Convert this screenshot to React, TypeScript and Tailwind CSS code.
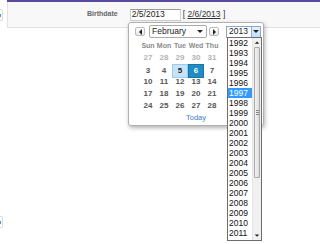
import React from 'react'

const years = Array.from({ length: 20 }, (_, i) => 1992 + i)

type Day = { n: number; muted?: boolean; kind?: 'hover' | 'selected' }

const weeks: Day[][] = [
  [{ n: 27, muted: true }, { n: 28, muted: true }, { n: 29, muted: true }, { n: 30, muted: true }, { n: 31, muted: true }, { n: 1 }, { n: 2 }],
  [{ n: 3 }, { n: 4 }, { n: 5, kind: 'hover' }, { n: 6, kind: 'selected' }, { n: 7 }, { n: 8 }, { n: 9 }],
  [{ n: 10 }, { n: 11 }, { n: 12 }, { n: 13 }, { n: 14 }, { n: 15 }, { n: 16 }],
  [{ n: 17 }, { n: 18 }, { n: 19 }, { n: 20 }, { n: 21 }, { n: 22 }, { n: 23 }],
  [{ n: 24 }, { n: 25 }, { n: 26 }, { n: 27 }, { n: 28 }, { n: 1, muted: true }, { n: 2, muted: true }],
]

function Arrow({ dir }: { dir: 'left' | 'right' | 'down' | 'up' }) {
  const pts = {
    left: '4,1 4,7 1,4',
    right: '1,1 1,7 4,4',
    down: '0,2 6,2 3,5',
    up: '0,5 6,5 3,2',
  }[dir]
  const w = dir === 'left' || dir === 'right' ? 5 : 6
  return (
    <svg width={w} height="8" viewBox={`0 0 ${w} 8`}>
      <polygon points={pts} fill="#222" />
    </svg>
  )
}

function dayClass(d: Day) {
  if (d.kind === 'hover') return 'bg-[#c8e2f8] border border-[#9fcaf0] text-[#222]'
  if (d.kind === 'selected') return 'bg-[#1f8cc4] border border-[#1a76a6] text-white'
  if (d.muted) return 'text-[#b4b4b4]'
  return 'text-[#555]'
}

export default function App() {
  return (
    <div className="relative flex w-[320px] h-[244px] overflow-hidden bg-white font-['Liberation_Sans',Arial,sans-serif]">
      {/* clipped side tabs */}
      <div className="w-[7px] shrink-0 flex flex-col">
        <div className="mt-[9px] h-[12px] w-[3px] rounded-r-[2px] border border-l-0 border-[#dcdcdc] bg-white flex items-center">
          <div className="h-[3px] w-[1px] bg-[#4a90d9]" />
        </div>
        <div className="mt-[195px] h-[12px] w-[3px] rounded-r-[2px] border border-l-0 border-[#dcdcdc] bg-white flex items-center">
          <div className="h-[3px] w-[1px] bg-[#4a90d9]" />
        </div>
      </div>

      <div className="flex-1">
        <div className="h-[2px] bg-[#5a4a9c]" />
        <div className="h-[26px] bg-[#f8f8f8] border-l border-b border-[#e2e2e2] flex items-center">
          <span className="ml-[79px] text-[7px] font-bold text-[#666]">Birthdate</span>
          <div className="ml-[12px] h-[12px] w-[51px] bg-white border border-[#cfcfcf] border-t-[#999] flex items-center pl-[1px] text-[8.5px] text-[#222]">
            2/5/2013
          </div>
          <span className="ml-[2px] text-[8.5px] text-[#333]">
            [ <span className="underline">2/6/2013</span> ]
          </span>
        </div>
      </div>

      {/* calendar popup */}
      <div className="absolute left-[128px] top-[22px] w-[136px] h-[104px] bg-white border border-[#b0b0b0] rounded-[3px] shadow-[1px_2px_4px_rgba(0,0,0,0.3)]">
        <div className="flex items-center mt-[2px] h-[13px]">
          <div className="ml-[6px] w-[10px] h-[9px] rounded-[2px] border border-[#bbb] bg-gradient-to-b from-white to-[#e8e8e8] flex items-center justify-center">
            <Arrow dir="left" />
          </div>
          <div className="ml-[4px] w-[58px] h-[13px] border border-[#aaa] rounded-[2px] bg-white flex items-center pl-[2px] pr-[3px] text-[8.5px] text-[#222]">
            <span className="flex-1">February</span>
            <Arrow dir="down" />
          </div>
          <div className="ml-[2px] w-[10px] h-[9px] rounded-[2px] border border-[#bbb] bg-gradient-to-b from-white to-[#e8e8e8] flex items-center justify-center">
            <Arrow dir="right" />
          </div>
          <div className="ml-[7px] w-[35px] h-[12px] border border-[#8aa8cc] bg-white flex items-center text-[8.5px] text-[#222]">
            <span className="flex-1 pl-[2px]">2013</span>
            <div className="w-[9px] h-full bg-gradient-to-b from-[#e6f1fb] to-[#c4dcf4] border-l border-[#7eb0e0] flex items-center justify-center">
              <Arrow dir="down" />
            </div>
          </div>
        </div>

        <div className="ml-[11px] mt-[2px] w-[112px]">
          <div className="grid grid-cols-7 h-[12px] items-center text-center text-[7px] font-bold text-[#8a8a8a]">
            <span>Sun</span>
            <span>Mon</span>
            <span>Tue</span>
            <span>Wed</span>
            <span>Thu</span>
            {/* Fri / Sat sit under the open year list */}
            <span className="invisible">Fri</span>
            <span className="invisible">Sat</span>
          </div>
          {weeks.map((week, i) => (
            <div key={i} className="grid grid-cols-7 h-[12px]">
              {week.map((d, j) => (
                <div
                  key={j}
                  className={`flex items-center justify-center text-[8px] font-bold ${dayClass(d)} ${
                    j > 4 ? 'invisible' : ''
                  }`}
                >
                  {d.n}
                </div>
              ))}
            </div>
          ))}
          <div className="h-[12px] flex items-center justify-center text-[7.5px] text-[#3b80c6]">
            Today
          </div>
        </div>
      </div>

      {/* year dropdown list */}
      <div className="absolute left-[227px] top-[37px] w-[35px] h-[204px] bg-white border border-[#6e6e6e] flex overflow-hidden">
        <div className="flex-1 flex flex-col">
          {years.map((y) => (
            <div
              key={y}
              className={`h-[10px] shrink-0 leading-[10px] pl-[1px] text-[8.5px] ${
                y === 1997 ? 'bg-[#3399ff] text-white' : 'text-[#111]'
              }`}
            >
              {y}
            </div>
          ))}
        </div>
        <div className="w-[9px] shrink-0 bg-[#f0f0f0] border-l border-[#e4e4e4] flex flex-col">
          <div className="h-[9px] flex items-center justify-center scale-75">
            <Arrow dir="up" />
          </div>
          <div className="h-[131px] mx-[1px] rounded-[1px] border border-[#a8a8a8] bg-gradient-to-r from-[#f4f4f4] to-[#dcdcdc] flex flex-col items-center justify-center gap-[1px]">
            <div className="w-[3px] h-[1px] bg-[#888]" />
            <div className="w-[3px] h-[1px] bg-[#888]" />
            <div className="w-[3px] h-[1px] bg-[#888]" />
          </div>
          <div className="flex-1" />
          <div className="h-[9px] flex items-center justify-center scale-75">
            <Arrow dir="down" />
          </div>
        </div>
      </div>
    </div>
  )
}
